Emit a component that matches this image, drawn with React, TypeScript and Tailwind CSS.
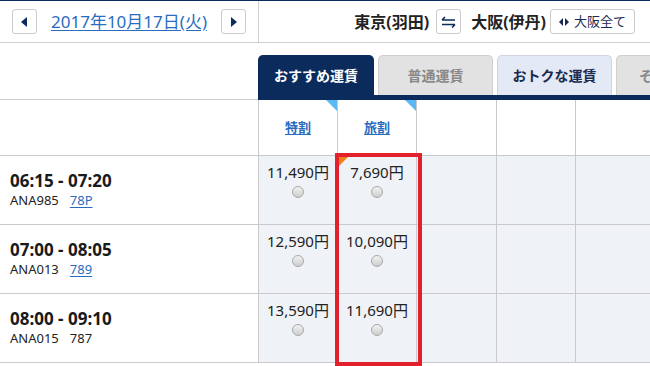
import React from "react";

type Flight = {
  time: string;
  no: string;
  plane: string;
  planeLink: boolean;
  prices: [string, string];
};

const flights: Flight[] = [
  { time: "06:15 - 07:20", no: "ANA985", plane: "78P", planeLink: true, prices: ["11,490円", "7,690円"] },
  { time: "07:00 - 08:05", no: "ANA013", plane: "789", planeLink: true, prices: ["12,590円", "10,090円"] },
  { time: "08:00 - 09:10", no: "ANA015", plane: "787", planeLink: false, prices: ["13,590円", "11,690円"] },
];

function Radio() {
  return (
    <span className="block w-[12px] h-[12px] rounded-full border border-[#a9a9a9] bg-gradient-to-b from-[#f2f2f2] to-[#cdcdcd]" />
  );
}

function Tri({ dir }: { dir: "left" | "right" }) {
  return (
    <svg width="12" height="12" viewBox="0 0 12 12" className="block">
      {dir === "right" ? <polygon points="1,0 12,0 12,11" fill="#5ab8f2" /> : <polygon points="0,0 11,0 0,11" fill="#f08019" />}
    </svg>
  );
}

function PriceCell({ price, corner, w }: { price: string; corner?: boolean; w: string }) {
  return (
    <div className={`${w} relative shrink-0 border-r border-[#cacaca] bg-[#eff2f7] flex flex-col items-center pt-[7px]`}>
      {corner && (
        <span className="absolute left-0 top-0">
          <Tri dir="left" />
        </span>
      )}
      <span className="text-[15px] leading-[19px] text-[#222]">{price}</span>
      <span className="mt-[4px]">
        <Radio />
      </span>
    </div>
  );
}

export default function App() {
  return (
    <div
      className="relative w-[650px] h-[366px] overflow-hidden bg-white text-[#222]"
      style={{ fontFamily: '"Noto Sans", "Noto Sans CJK JP", sans-serif' }}
    >
      {/* top bar */}
      <div className="flex h-[43px] border-t border-t-[#0b2b5c] border-b border-b-[#cfcfcf]">
        <div className="w-[259px] shrink-0 border-r border-[#cfcfcf] flex items-center pl-[12px]">
          <button className="w-[25px] h-[25px] rounded-[3px] border border-[#cccccc] bg-white flex items-center justify-center">
            <svg width="7" height="10" viewBox="0 0 7 10">
              <polygon points="6,0 6,10 0,5" fill="#0b2b5c" />
            </svg>
          </button>
          <a className="ml-[14px] text-[17px] text-[#2a6cc0] underline underline-offset-2">
            2017年10月17日(火)
          </a>
          <button className="ml-[14px] w-[25px] h-[25px] rounded-[3px] border border-[#cccccc] bg-white flex items-center justify-center">
            <svg width="7" height="10" viewBox="0 0 7 10">
              <polygon points="1,0 1,10 7,5" fill="#0b2b5c" />
            </svg>
          </button>
        </div>
        <div className="flex-1 flex items-center justify-end pr-[15px]">
          <span className="text-[16px] font-bold text-[#222]">東京(羽田)</span>
          <button className="ml-[7px] w-[25px] h-[25px] rounded-[3px] border border-[#cccccc] bg-white flex items-center justify-center">
            <svg width="15" height="12" viewBox="0 0 15 12">
              <path d="M1 4h13M1 4l3-3" stroke="#0b2b5c" strokeWidth="1.6" fill="none" />
              <path d="M1 8.5h13M14 8.5l-3 3" stroke="#0b2b5c" strokeWidth="1.6" fill="none" />
            </svg>
          </button>
          <span className="ml-[10px] text-[16px] font-bold text-[#222]">大阪(伊丹)</span>
          <button className="ml-[4px] h-[25px] w-[85px] rounded-[3px] border border-[#cccccc] bg-white flex items-center pl-[8px] gap-[5px] text-[13px] text-[#1b2b4f]">
            <svg width="10" height="8" viewBox="0 0 10 8">
              <polygon points="4,0 4,8 0,4" fill="#1b2b4f" />
              <polygon points="6,0 6,8 10,4" fill="#1b2b4f" />
            </svg>
            大阪全て
          </button>
        </div>
      </div>

      {/* tabs */}
      <div className="flex h-[57px]">
        <div className="w-[258px] shrink-0 border-b border-[#cfcfcf]" />
        <div className="flex-1 min-w-0 flex flex-col">
          <div className="flex-1 flex items-end gap-[4px] overflow-hidden">
            <div className="w-[116px] h-[40px] shrink-0 rounded-t-[5px] bg-[#0b2b5c] text-white text-[14px] font-bold flex items-center justify-center">
              おすすめ運賃
            </div>
            <div className="w-[115px] h-[40px] shrink-0 rounded-t-[5px] bg-[#e2e2e2] border border-b-0 border-[#cfcfcf] text-[#888] text-[14px] font-bold flex items-center justify-center">
              普通運賃
            </div>
            <div className="w-[115px] h-[40px] shrink-0 rounded-t-[5px] bg-[#e4e9f6] border border-b-0 border-[#cfd4e0] text-[#1b2b4f] text-[14px] font-bold flex items-center justify-center">
              おトクな運賃
            </div>
            <div className="w-[115px] h-[40px] shrink-0 rounded-t-[5px] bg-[#e2e2e2] border border-b-0 border-[#cfcfcf] text-[#888] text-[14px] font-bold flex items-center pl-[22px]">
              その他
            </div>
          </div>
          <div className="h-[5px] bg-[#0b2b5c]" />
        </div>
      </div>

      {/* column header */}
      <div className="flex h-[56px] border-b border-[#cacaca]">
        <div className="w-[259px] shrink-0 border-r border-[#cacaca]" />
        {["特割", "旅割"].map((t) => (
          <div key={t} className="w-[79px] shrink-0 relative border-r border-[#cacaca] flex items-center justify-center">
            <span className="absolute right-0 top-0">
              <Tri dir="right" />
            </span>
            <a className="text-[13px] font-bold text-[#2a6cc0] underline underline-offset-2">{t}</a>
          </div>
        ))}
        <div className="w-[80px] shrink-0 border-r border-[#cacaca]" />
        <div className="w-[79px] shrink-0 border-r border-[#cacaca]" />
        <div className="w-[79px] shrink-0 border-r border-[#cacaca]" />
      </div>

      {/* flights */}
      {flights.map((f, i) => (
        <div key={f.no} className="flex h-[69px] border-b border-[#cacaca]">
          <div className="w-[259px] shrink-0 border-r border-[#cacaca] pl-[10px] pt-[14px]">
            <div className="text-[17px] font-bold leading-[22px] text-[#1a1a1a]">{f.time}</div>
            <div className="text-[13px] leading-[16px] text-[#222]">
              {f.no}
              <span className={`ml-[11px] ${f.planeLink ? "text-[#2a6cc0] underline underline-offset-2" : ""}`}>{f.plane}</span>
            </div>
          </div>
          <PriceCell w="w-[79px]" price={f.prices[0]} />
          <PriceCell w="w-[79px]" price={f.prices[1]} corner={i === 0} />
          <div className="w-[80px] shrink-0 border-r border-[#cacaca] bg-[#eff2f7]" />
          <div className="w-[79px] shrink-0 border-r border-[#cacaca] bg-[#eff2f7]" />
          <div className="w-[79px] shrink-0 border-r border-[#cacaca] bg-[#eff2f7]" />
        </div>
      ))}

      {/* highlight annotation */}
      <div className="absolute left-[335px] top-[153px] w-[87px] h-[213px] border-[4px] border-[#e3212d] pointer-events-none" />
    </div>
  );
}
